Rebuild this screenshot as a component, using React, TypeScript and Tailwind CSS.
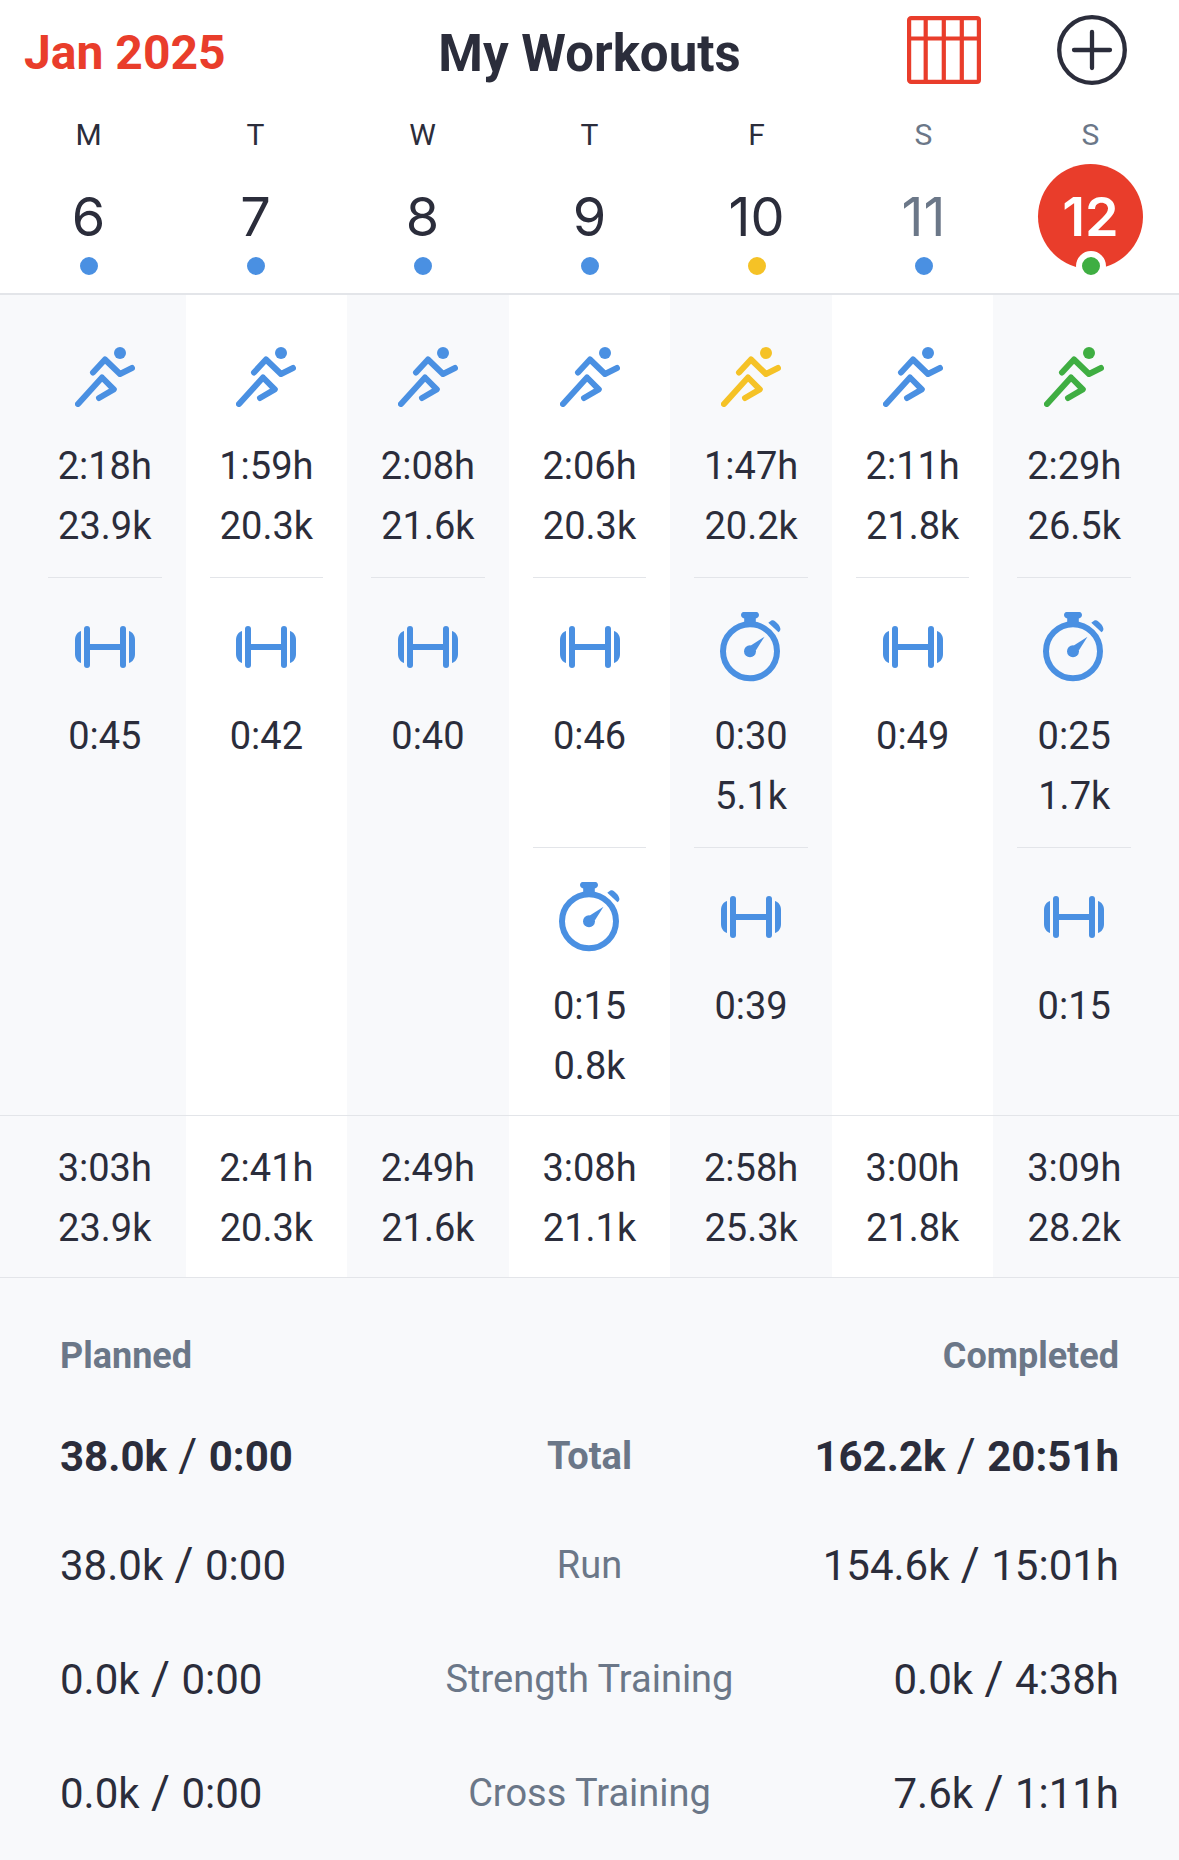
type Tone = 'blue' | 'yellow' | 'green';
type Kind = 'run' | 'strength' | 'cross';

interface Activity {
  kind: Kind;
  tone?: Tone;
  time: string;
  distance?: string;
}

interface Day {
  letter: string;
  date: number;
  tone: Tone;
  weekend?: boolean;
  selected?: boolean;
  activities: Activity[];
  total: [string, string];
}

const WEEK: Day[] = [
  {
    letter: 'M', date: 6, tone: 'blue',
    activities: [
      { kind: 'run', time: '2:18h', distance: '23.9k' },
      { kind: 'strength', time: '0:45' },
    ],
    total: ['3:03h', '23.9k'],
  },
  {
    letter: 'T', date: 7, tone: 'blue',
    activities: [
      { kind: 'run', time: '1:59h', distance: '20.3k' },
      { kind: 'strength', time: '0:42' },
    ],
    total: ['2:41h', '20.3k'],
  },
  {
    letter: 'W', date: 8, tone: 'blue',
    activities: [
      { kind: 'run', time: '2:08h', distance: '21.6k' },
      { kind: 'strength', time: '0:40' },
    ],
    total: ['2:49h', '21.6k'],
  },
  {
    letter: 'T', date: 9, tone: 'blue',
    activities: [
      { kind: 'run', time: '2:06h', distance: '20.3k' },
      { kind: 'strength', time: '0:46' },
      { kind: 'cross', time: '0:15', distance: '0.8k' },
    ],
    total: ['3:08h', '21.1k'],
  },
  {
    letter: 'F', date: 10, tone: 'yellow',
    activities: [
      { kind: 'run', tone: 'yellow', time: '1:47h', distance: '20.2k' },
      { kind: 'cross', time: '0:30', distance: '5.1k' },
      { kind: 'strength', time: '0:39' },
    ],
    total: ['2:58h', '25.3k'],
  },
  {
    letter: 'S', date: 11, tone: 'blue', weekend: true,
    activities: [
      { kind: 'run', time: '2:11h', distance: '21.8k' },
      { kind: 'strength', time: '0:49' },
    ],
    total: ['3:00h', '21.8k'],
  },
  {
    letter: 'S', date: 12, tone: 'green', weekend: true, selected: true,
    activities: [
      { kind: 'run', tone: 'green', time: '2:29h', distance: '26.5k' },
      { kind: 'cross', time: '0:25', distance: '1.7k' },
      { kind: 'strength', time: '0:15' },
    ],
    total: ['3:09h', '28.2k'],
  },
];

const SUMMARY = [
  { label: 'Total', planned: ['38.0k', '0:00'], completed: ['162.2k', '20:51h'] },
  { label: 'Run', planned: ['38.0k', '0:00'], completed: ['154.6k', '15:01h'] },
  { label: 'Strength Training', planned: ['0.0k', '0:00'], completed: ['0.0k', '4:38h'] },
  { label: 'Cross Training', planned: ['0.0k', '0:00'], completed: ['7.6k', '1:11h'] },
];

const TEXT_TONE: Record<Tone, string> = {
  blue: 'text-[#4a90e2]',
  yellow: 'text-[#f5c226]',
  green: 'text-[#3fae42]',
};

const DOT_TONE: Record<Tone, string> = {
  blue: 'bg-[#4a90e2]',
  yellow: 'bg-[#f5c226]',
  green: 'bg-[#3fae42]',
};

function RunIcon() {
  return (
    <svg width="60" height="60" viewBox="0 0 60 60" fill="none" aria-hidden>
      <circle cx="45" cy="6" r="6" fill="currentColor" />
      <g stroke="currentColor" strokeWidth="6" strokeLinecap="round" strokeLinejoin="round">
        <path d="M18 25.5 L30 12.5 L45 27 L57 21" />
        <path d="M3 57 L27 30.5 L38.8 42.3 L24 51" />
      </g>
    </svg>
  );
}

function StrengthIcon() {
  return (
    <svg width="60" height="42" viewBox="0 0 60 42" fill="currentColor" aria-hidden>
      <path d="M6 5 C2.5 6 0 9.5 0 14 V28 C0 32.5 2.5 36 6 37 Z" />
      <rect x="9" y="0" width="6" height="42" rx="3" />
      <rect x="14" y="18" width="32" height="6" />
      <rect x="45" y="0" width="6" height="42" rx="3" />
      <path d="M54 5 C57.5 6 60 9.5 60 14 V28 C60 32.5 57.5 36 54 37 Z" />
    </svg>
  );
}

function CrossIcon() {
  return (
    <svg width="62" height="70" viewBox="0 0 62 70" fill="currentColor" aria-hidden>
      <circle cx="30" cy="39.3" r="27" fill="none" stroke="currentColor" strokeWidth="6" />
      <path d="M23.5 0 H36.5 C38 0 39 1.5 39 3 C39 5 37.5 6 35.8 6.5 V12 H24.2 V6.5 C22.5 6 21 5 21 3 C21 1.5 22 0 23.5 0 Z" />
      <path d="M48.3 10.8 L51 8.8 C52.5 8 54 8.4 55 9.2 C58 11.5 59.5 13.5 60.3 16.2 C60.6 17.5 60.2 18.5 59.6 19.2 L58.5 20.3 Z" />
      <circle cx="30" cy="39.3" r="6" />
      <path d="M44.5 24.8 L35.8 38.5 L30.8 33.6 Z" />
    </svg>
  );
}

function ActivityIcon({ kind }: { kind: Kind }) {
  if (kind === 'run') return <RunIcon />;
  if (kind === 'strength') return <StrengthIcon />;
  return <CrossIcon />;
}

function ActivityCell({ activity, last }: { activity: Activity; last: boolean }) {
  return (
    <div className={`mx-6 flex flex-col items-center pt-[34px] ${last ? 'pb-[19px]' : 'border-b border-[#e3e5e9] pb-[21px]'}`}>
      <div className={`flex h-[70px] items-center ${TEXT_TONE[activity.tone ?? 'blue']}`}>
        <ActivityIcon kind={activity.kind} />
      </div>
      <div className="mt-6 min-h-[120px] text-center">
        <p>{activity.time}</p>
        {activity.distance && <p>{activity.distance}</p>}
      </div>
    </div>
  );
}

function DayHeading({ day }: { day: Day }) {
  const color = day.weekend ? 'text-[#6b7788]' : '';
  return (
    <button type="button" className="flex flex-1 flex-col items-center pt-[15px] pb-3">
      <span className={`text-[30px] leading-[40px] ${color}`}>{day.letter}</span>
      <span
        className={`mt-[9px] flex size-[105px] items-center justify-center rounded-full font-['Inter',sans-serif] text-[54px] ${
          day.selected ? 'bg-[#e93d2b] font-semibold text-white' : color
        }`}
      >
        {day.date}
      </span>
      {/* white ring cuts into the selected circle */}
      <span className={`relative -mt-[18px] size-[30px] rounded-full border-[6px] border-white ${DOT_TONE[day.tone]}`} />
    </button>
  );
}

function Pair({ values, bold }: { values: string[]; bold: boolean }) {
  const weight = bold ? 'font-bold' : 'font-normal';
  return (
    <>
      <span className={weight}>{values[0]}</span>
      <span className="text-[46px] leading-none"> / </span>
      <span className={weight}>{values[1]}</span>
    </>
  );
}

export default function App() {
  return (
    <div className="min-h-screen bg-[#f8f9fb] font-['Roboto',sans-serif] text-[#2b2d3b]">
      <header className="border-b-2 border-[#e3e5e9] bg-white">
        <div className="grid h-[100px] grid-cols-[1fr_auto_1fr] items-center pr-[52px] pl-6">
          <a href="#month" className="pt-1.5 text-[48px] leading-none font-bold text-[#e93d2b]">Jan 2025</a>
          <h1 className="pt-1.5 pl-7 text-[51px] leading-none font-bold">My Workouts</h1>
          <div className="flex items-center justify-end gap-[76px]">
            <button type="button" aria-label="Week view" className="text-[#e93d2b]">
              <svg width="74" height="68" viewBox="0 0 74 68" fill="none" stroke="currentColor" strokeWidth="4.2">
                <rect x="2.1" y="2.1" width="69.8" height="63.8" rx="2" />
                <path d="M2 22.5 H72 M18.7 2 V66 M36.8 2 V66 M54.8 2 V66" />
              </svg>
            </button>
            <button type="button" aria-label="Add workout">
              <svg width="70" height="70" viewBox="0 0 70 70" fill="none" stroke="currentColor" strokeWidth="4.3" strokeLinecap="round">
                <circle cx="35" cy="35" r="32.8" />
                <path d="M35 17 V53 M17 35 H53" />
              </svg>
            </button>
          </div>
        </div>
        <div className="flex px-[5px]">
          {WEEK.map((day) => (
            <DayHeading key={day.date} day={day} />
          ))}
        </div>
      </header>

      <section className="flex border-b border-[#e3e5e9] px-6 text-[38px] leading-[60px]">
        {WEEK.map((day, i) => (
          <div key={day.date} className={`flex-1 pt-[13px] ${i % 2 ? 'bg-white' : ''}`}>
            {day.activities.map((activity, n) => (
              <ActivityCell key={n} activity={activity} last={n === day.activities.length - 1} />
            ))}
          </div>
        ))}
      </section>

      <section className="flex border-b border-[#e3e5e9] px-6 text-[38px] leading-[60px]">
        {WEEK.map((day, i) => (
          <div key={day.date} className={`flex-1 pt-[22px] pb-[19px] text-center ${i % 2 ? 'bg-white' : ''}`}>
            <p>{day.total[0]}</p>
            <p>{day.total[1]}</p>
          </div>
        ))}
      </section>

      <section className="px-[60px] pt-[30px]">
        <table className="w-full table-fixed text-[42px]">
          <thead>
            <tr className="h-24 text-[36px] text-[#6b7788]">
              <th className="text-left font-bold">Planned</th>
              <td />
              <th className="text-right font-bold">Completed</th>
            </tr>
          </thead>
          <tbody>
            {SUMMARY.map((row, i) => (
              <tr key={row.label} className={i === 0 ? 'h-[104px]' : 'h-[114px]'}>
                <td className="whitespace-nowrap">
                  <Pair values={row.planned} bold={i === 0} />
                </td>
                <th scope="row" className={`text-[38px] text-[#6b7788] ${i === 0 ? 'font-bold' : 'font-normal'}`}>
                  {row.label}
                </th>
                <td className="text-right whitespace-nowrap">
                  <Pair values={row.completed} bold={i === 0} />
                </td>
              </tr>
            ))}
          </tbody>
        </table>
      </section>
    </div>
  );
}
